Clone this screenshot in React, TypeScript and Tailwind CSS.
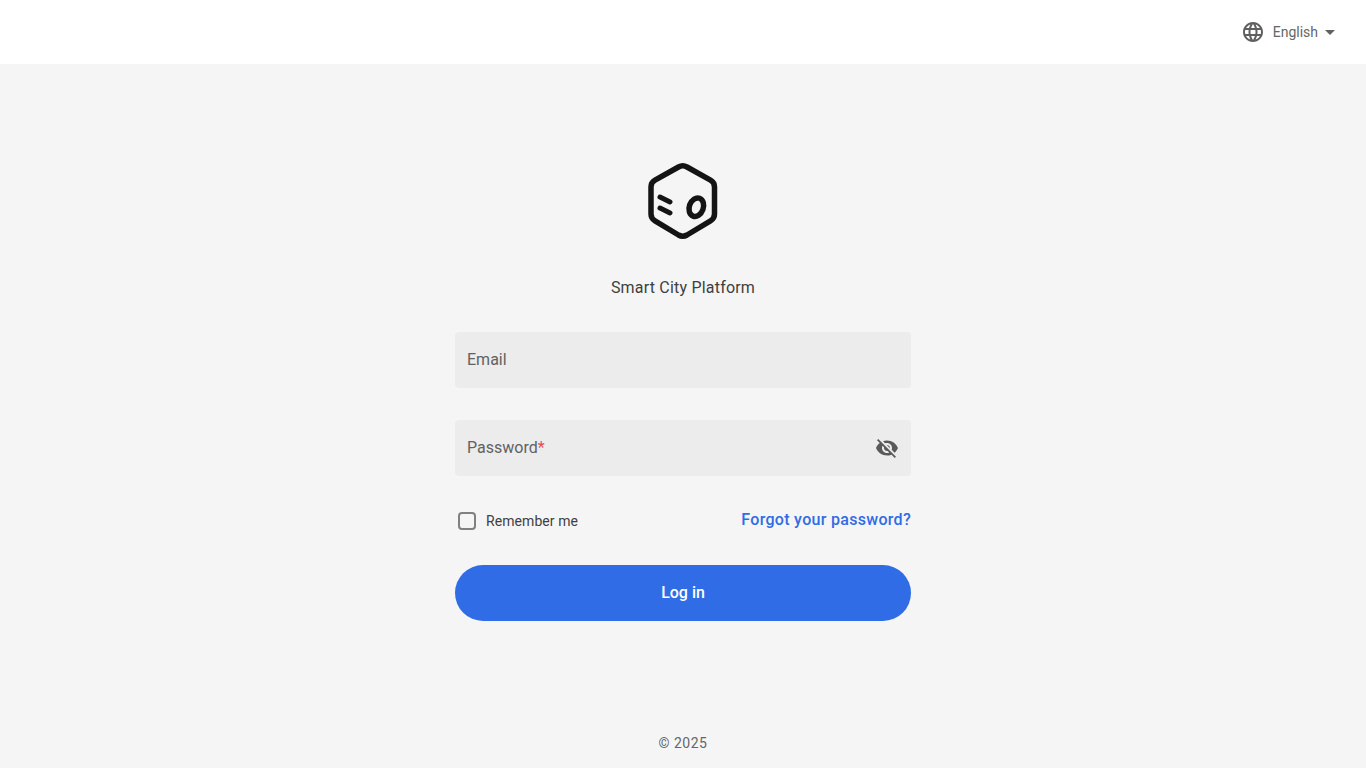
import { ChangeEvent, useState } from 'react'

function GlobeIcon() {
  return (
    <svg width="24" height="24" viewBox="0 0 24 24" fill="#5f5f5f" aria-hidden="true">
      <path d="M11.99 2C6.47 2 2 6.48 2 12s4.47 10 9.99 10C17.52 22 22 17.52 22 12S17.52 2 11.99 2zm6.93 6h-2.95c-.32-1.25-.78-2.45-1.38-3.56 1.84.63 3.37 1.91 4.33 3.56zM12 4.04c.83 1.2 1.48 2.53 1.91 3.96h-3.82c.43-1.43 1.08-2.76 1.91-3.96zM4.26 14C4.1 13.36 4 12.69 4 12s.1-1.36.26-2h3.38c-.08.66-.14 1.32-.14 2 0 .68.06 1.34.14 2H4.26zm.82 2h2.95c.32 1.25.78 2.45 1.38 3.56-1.84-.63-3.37-1.9-4.33-3.56zm2.95-8H5.08c.96-1.66 2.49-2.93 4.33-3.56C8.81 5.55 8.35 6.75 8.03 8zM12 19.96c-.83-1.2-1.48-2.53-1.91-3.96h3.82c-.43 1.43-1.08 2.76-1.91 3.96zM14.34 14H9.66c-.09-.66-.16-1.32-.16-2 0-.68.07-1.35.16-2h4.68c.09.65.16 1.32.16 2 0 .68-.07 1.34-.16 2zm.25 5.56c.6-1.11 1.06-2.31 1.38-3.56h2.95c-.96 1.65-2.49 2.93-4.33 3.56zM16.36 14c.08-.66.14-1.32.14-2 0-.68-.06-1.34-.14-2h3.38c.16.64.26 1.31.26 2s-.1 1.36-.26 2h-3.38z" />
    </svg>
  )
}

function EyeOffIcon() {
  return (
    <svg width="24" height="24" viewBox="0 0 24 24" fill="#5a5a5a" aria-hidden="true">
      <path d="M12 7c2.76 0 5 2.24 5 5 0 .65-.13 1.26-.36 1.83l2.92 2.92c1.51-1.26 2.7-2.89 3.43-4.75-1.73-4.39-6-7.5-11-7.5-1.4 0-2.74.25-3.98.7l2.16 2.16C10.74 7.13 11.35 7 12 7zM2 4.27l2.28 2.28.46.46C3.08 8.3 1.78 10.02 1 12c1.73 4.39 6 7.5 11 7.5 1.55 0 3.03-.3 4.38-.84l.42.42L19.73 22 21 20.73 3.27 3 2 4.27zM7.53 9.8l1.55 1.55c-.05.21-.08.43-.08.65 0 1.66 1.34 3 3 3 .22 0 .44-.03.65-.08l1.55 1.55c-.67.33-1.41.53-2.2.53-2.76 0-5-2.24-5-5 0-.79.2-1.53.53-2.2zm4.31-.78l3.15 3.15.02-.16c0-1.66-1.34-3-3-3l-.17.01z" />
    </svg>
  )
}

function Logo() {
  return (
    <svg width="72" height="80" viewBox="0 0 72 80" fill="none" stroke="#141414" strokeLinecap="round" strokeLinejoin="round" aria-hidden="true">
      <path
        strokeWidth="5.5"
        d="M31.5 6 Q35.75 3.6 40 6 L63.5 19.2 Q67.5 21.5 67.5 26 L67.5 53 Q67.5 57.5 63.5 59.8 L40 74 Q35.75 76.4 31.5 74 L8 59.8 Q4 57.5 4 53 L4 26 Q4 21.5 8 19.2 Z"
      />
      <path strokeWidth="5" d="M13 36 L23 41 M13 47 L23 52" />
      <ellipse cx="49.3" cy="46.2" rx="7" ry="9.5" strokeWidth="5.5" transform="rotate(20 49.3 46.2)" />
    </svg>
  )
}

function Field({ label, required, trailing }: { label: string; required?: boolean; trailing?: React.ReactNode }) {
  const [value, setValue] = useState('')
  return (
    <label className="flex h-14 items-center justify-between rounded bg-[#ececec] pl-3 pr-3 text-base text-[#616161]">
      <span className="relative flex-1">
        {!value && (
          <span className="pointer-events-none absolute left-0 top-1/2 -translate-y-1/2">
            {label}
            {required && <span className="text-[#e05050]">*</span>}
          </span>
        )}
        <input
          value={value}
          onChange={(e: ChangeEvent<HTMLInputElement>) => setValue(e.target.value)}
          type={required ? 'password' : 'text'}
          className="w-full bg-transparent outline-none"
        />
      </span>
      {trailing}
    </label>
  )
}

export default function App() {
  return (
    <div className="flex min-h-screen flex-col bg-[#f5f5f5] font-['Roboto',sans-serif]">
      {/* Top bar */}
      <header className="flex h-16 items-center justify-end bg-white pr-[30px]">
        <button className="flex items-center text-sm text-[#666666]">
          <GlobeIcon />
          <span className="ml-2">English</span>
          <svg width="24" height="24" viewBox="0 0 24 24" fill="#616161" className="-mr-[6px]" aria-hidden="true">
            <path d="M7 10l5 5 5-5z" />
          </svg>
        </button>
      </header>

      <main className="mx-auto flex w-[456px] flex-1 flex-col">
        <div className="mt-[97px] flex justify-center">
          <Logo />
        </div>
        <p className="mt-[35px] text-center text-base leading-6 tracking-[0.2px] text-[#404040]">Smart City Platform</p>

        <form className="mt-[32px] flex flex-col gap-8" onSubmit={(e) => e.preventDefault()}>
          <Field label="Email" />
          <Field label="Password" required trailing={<EyeOffIcon />} />
        </form>

        <div className="mt-[35px] flex items-center justify-between">
          <label className="flex items-center text-sm tracking-[0.07px] text-[#404040]">
            <span className="ml-[3px] h-[18px] w-[18px] rounded-[4px] border-2 border-[#808080]" />
            <span className="ml-[10px]">Remember me</span>
          </label>
          <a href="#" className="-mt-[2px] text-base font-medium leading-5 tracking-[0.3px] text-[#2f6ce5]">
            Forgot your password?
          </a>
        </div>

        <button className="mt-[34px] h-14 rounded-[28px] bg-[#2f6ce5] text-base font-medium text-white">Log in</button>
      </main>

      <footer className="pb-4 text-center text-sm leading-[18px] tracking-[0.5px] text-[#666666]">© 2025</footer>
    </div>
  )
}
